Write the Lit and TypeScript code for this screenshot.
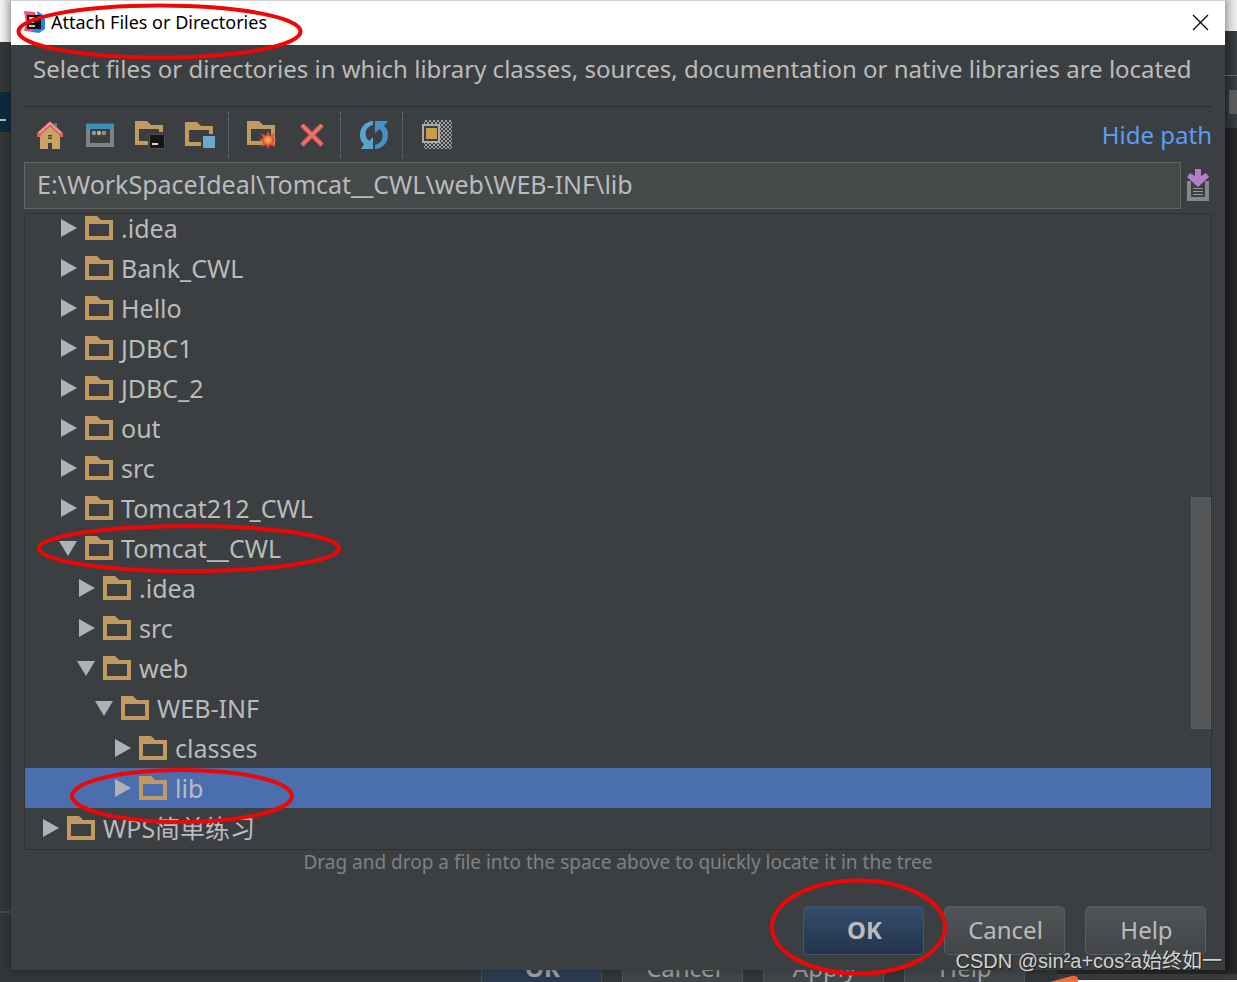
import { LitElement, html, css, svg } from "lit";
import { customElement, state } from "lit/decorators.js";
import { classMap } from "lit/directives/class-map.js";
import { styleMap } from "lit/directives/style-map.js";

interface Entry {
  name: string;
  depth: number;
  open?: boolean;
}

const ENTRIES: Entry[] = [
  { name: ".idea", depth: 1 },
  { name: "Bank_CWL", depth: 1 },
  { name: "Hello", depth: 1 },
  { name: "JDBC1", depth: 1 },
  { name: "JDBC_2", depth: 1 },
  { name: "out", depth: 1 },
  { name: "src", depth: 1 },
  { name: "Tomcat212_CWL", depth: 1 },
  { name: "Tomcat__CWL", depth: 1, open: true },
  { name: ".idea", depth: 2 },
  { name: "src", depth: 2 },
  { name: "web", depth: 2, open: true },
  { name: "WEB-INF", depth: 3, open: true },
  { name: "classes", depth: 4 },
  { name: "lib", depth: 4 },
  { name: "WPS简单练习", depth: 0 },
];

const folder = svg`<path fill="#c09a61" fill-rule="evenodd" d="M0 0H12L16 4H28V24H0ZM4 8V20H24V8Z"/>`;

const icons = {
  home: html`<svg width="28" height="30" viewBox="0 0 28 30" aria-hidden="true">
    <path fill="#6e6e6e" d="M18 3h3v8h-3z"/>
    <path fill="#c9a465" d="M4 13L14 4l10 9v16h-8v-6h-4v6H4z"/>
    <path fill="#3c3f41" d="M12 15h4v4h-4z"/>
    <path stroke="#c9a465" d="M12 17h4"/>
    <path fill="none" stroke="#d96464" stroke-width="4" d="M3 17v-3L14 4l11 10v3"/>
    <path fill="none" stroke="#f09a94" stroke-width="2" d="M3 13L14 3l11 10"/>
  </svg>`,
  desktop: html`<svg width="28" height="26" viewBox="0 0 28 26" aria-hidden="true">
    <path fill="none" stroke="#808284" stroke-width="4" d="M2 5v18h24V5"/>
    <path fill="#3e8fb8" d="M0 1h28v6H0z"/><path fill="#2c6c90" d="M0 1h28v1H0z"/>
    <circle cx="8" cy="11" r="2.2" fill="#6f9fbd"/><circle cx="13" cy="11" r="2.2" fill="#c9a86f"/><circle cx="18" cy="11" r="2.2" fill="#909395"/>
  </svg>`,
  project: html`<svg width="30" height="28" viewBox="0 0 30 28" aria-hidden="true">
    ${folder}<path fill="#3c3f41" d="M13 11h17v17H13z"/><path fill="#161616" stroke="#4b4d4f" d="M14.500 13.500h15v14h-15z"/><path fill="#d8d8d8" d="M17 22h6v2h-6z"/>
  </svg>`,
  module: html`<svg width="30" height="26" viewBox="0 0 30 26" aria-hidden="true">
    ${folder}<path fill="#3c3f41" d="M16 12h12v14H16z"/><path fill="#6da8c9" d="M18 14h12v12H18z"/>
  </svg>`,
  create: html`<svg width="30" height="28" viewBox="0 0 30 28" aria-hidden="true">
    ${folder}<path fill="#e0503a" d="M21 10l2 5 5-3-2 5 4 2-4 2 2 5-5-2-2 4-2-4-5 2 2-5-4-2 4-2-2-5 5 3z"/><circle cx="21" cy="19" r="4" fill="#f3853f"/><circle cx="21" cy="19" r="2" fill="#ffb75a"/>
  </svg>`,
  remove: html`<svg width="26" height="26" viewBox="0 0 26 26" aria-hidden="true">
    <path fill="none" stroke="#d85850" stroke-width="5" d="M3 3l20 20M23 3L3 23"/><path fill="none" stroke="#ed7c70" stroke-width="2" d="M3 3l20 20M23 3L3 23"/>
  </svg>`,
  refresh: html`<svg width="30" height="30" viewBox="0 0 30 30" aria-hidden="true">
    <path fill="#5ba3cf" d="M14 1C5 2 1 8 1 15c0 4 1 7 4 9l-3 5h12V17l-4 4C4 15 6 7 14 5z"/>
    <path fill="#4393c4" d="M16 29c9-1 13-7 13-14 0-4-1-7-4-9l4-5H16v12l5-4c5 6 3 14-5 16z"/>
  </svg>`,
  hidden: html`<svg width="31" height="29" viewBox="0 0 31 29" aria-hidden="true">
    <defs><pattern id="checks" width="4" height="4" patternUnits="userSpaceOnUse"><path fill="#9c9ea0" d="M0 0h2v2H0zM2 2h2v2H2z"/></pattern></defs>
    <path fill="url(#checks)" d="M3 0h28v29H3z"/>
    <path fill="#3c3f41" stroke="#a9abad" stroke-width="2" d="M2 5h16v17H2z"/><path fill="#c99d4c" d="M5 8h11v11H5z"/>
  </svg>`,
};

@customElement("app-root")
export class AppRoot extends LitElement {
  @state() private selected = 14;

  static styles = css`
    :host {
      display: block;
      position: relative;
      box-sizing: border-box;
      height: 100vh;
      overflow: hidden;
      padding: 0 12px 12px 11px;
      background: #333638;
      color: #bbbbbb;
      font: 24px/32px "Noto Sans", "Noto Sans CJK SC", sans-serif;
    }
    * { box-sizing: border-box; }
    button, input { font: inherit; color: inherit; margin: 0; padding: 0; border: 0; background: none; }
    svg { display: block; flex: none; }

    .behind { position: absolute; inset: 0; overflow: hidden; }
    .left-top { position: absolute; left: 0; top: 0; width: 11px; height: 42px; background: linear-gradient(90deg, #f4f4f4, #cfcfcf); }
    .left-pick { position: absolute; left: 0; top: 92px; width: 11px; height: 40px; background: #0d293e; border-right: 1px solid #1a2a35; }
    .left-mark { position: absolute; left: 0; top: 119px; width: 6px; height: 2px; background: #bbbbbb; }
    .left-rule { position: absolute; left: 0; top: 911px; width: 11px; height: 2px; background: #484b4d; }
    .right { position: absolute; right: 0; top: 0; width: 12px; height: 100%; background: linear-gradient(90deg, #1e1e1f, #28282a); }
    .right-top { height: 31px; background: linear-gradient(90deg, #cccccc, #efefef); }
    .right-bar { height: 97px; background: linear-gradient(90deg, #2c2e30, #3a3d3f); padding-top: 44px; }
    .right-bar::before { content: ""; display: block; height: 1px; background: #606264; }
    .right-bar::after { content: ""; display: block; height: 24px; margin: 14px 0 0 4px; background: #595b5d; }
    .under { position: absolute; left: 481px; top: 944px; display: flex; gap: 20px; opacity: 0.8; }
    .corner { position: absolute; left: 1057px; right: 0; top: 970px; height: 12px; background: #252627; }
    .corner::before { content: ""; position: absolute; left: 0; right: 0; top: 4px; height: 6px; background: #393b3d; }
    .corner::after { content: ""; position: absolute; left: 20px; right: 0; bottom: 0; height: 2px; background: #ffffff; }
    .flag { position: absolute; left: 1050px; top: 975px; }
    .push { width: 121px; height: 49px; border: 1px solid #5a5e60; border-radius: 5px; background: linear-gradient(#515557, #424547); text-align: center; line-height: 46px; padding: 0 0 2px 2px; }
    .push.main { background: linear-gradient(#344e6d, #24344b); border-color: #43566c; font-weight: 700; }

    .dialog { position: relative; height: 100%; display: flex; flex-direction: column; background: #3c3f41; box-shadow: 0 0 8px rgba(0, 0, 0, 0.35); }
    .title { flex: none; height: 45px; display: flex; align-items: center; gap: 5px; padding: 0 16px 2px 12px; background: #ffffff; color: #000000; border-top: 1px solid #d0d0d0; }
    .title h1 { flex: 1; margin: 0; font-size: 18px; font-weight: 400; line-height: 42px; }
    .body { flex: 1; min-height: 0; display: flex; flex-direction: column; padding: 0 13px 15px; }
    .lead { margin: 0 0 0 9px; padding: 8px 0 21px; white-space: nowrap; }
    .bar { flex: none; display: flex; align-items: center; height: 56px; border-top: 1px solid #2b2d2f; padding: 0 0 0 1px; }
    .tool { width: 50px; height: 40px; display: flex; align-items: center; justify-content: center; }
    .split { width: 1px; height: 46px; margin: 0 8px 0 3px; border-left: 1px dotted #77797b; }
    .bar a { margin-left: auto; color: #589df6; text-decoration: none; }
    .path { flex: none; display: flex; align-items: center; gap: 3px; margin-bottom: 4px; }
    .path input { flex: 1; min-width: 0; height: 47px; padding: 0 12px 4px; border: 1px solid #646464; background: #45494a; font-size: 25px; }
    .history { width: 28px; display: flex; justify-content: center; }

    .tree { position: relative; flex: 1; min-height: 0; display: flex; flex-direction: column; justify-content: flex-end; overflow: hidden; border: 1px solid #2f3133; padding-bottom: 1px; font-size: 25px; }
    .row { flex: none; height: 40px; display: flex; align-items: center; gap: 8px; text-align: left; white-space: pre; padding-right: 24px; }
    .row.on { background: #4b6eaf; }
    .thumb { position: absolute; right: 0; top: 283px; width: 20px; height: 232px; background: #555657; border: 1px solid #5c5d5e; }
    .hint { margin: 0 0 31px; line-height: 25px; font-size: 19px; text-align: center; color: #7f8183; }
    .actions { flex: none; display: flex; justify-content: flex-end; gap: 20px; padding-right: 6px; }

    .marks { position: absolute; inset: 0; width: 100%; height: 100%; pointer-events: none; }
    .credit { position: absolute; right: 15px; bottom: 6px; font-family: "Liberation Sans", "Noto Sans CJK SC", sans-serif; font-size: 20px; line-height: 30px; color: #d2d2d2; text-shadow: 1px 1px 1px #222222; white-space: nowrap; }
  `;

  private row(e: Entry, i: number) {
    return html`<button
      class=${classMap({ row: true, on: i === this.selected })}
      role="treeitem"
      aria-level=${e.depth + 1}
      aria-expanded=${e.open ? "true" : "false"}
      aria-selected=${i === this.selected ? "true" : "false"}
      style=${styleMap({ paddingLeft: `${16 + e.depth * 18}px` })}
      @click=${() => (this.selected = i)}
    ><svg width="18" height="20" viewBox="0 0 18 20" aria-hidden="true"><path fill="#afb1b3" d=${e.open ? "M0 3H18L9 18Z" : "M2 1L18 10L2 19Z"}/></svg><svg width="28" height="24" viewBox="0 0 28 24" aria-hidden="true">${folder}</svg><span>${e.name}</span></button>`;
  }

  render() {
    const tool = (label: string, icon: unknown) => html`<button class="tool" aria-label=${label}>${icon}</button>`;
    return html`
      <div class="behind" aria-hidden="true">
        <div class="left-top"></div>
        <div class="left-pick"></div>
        <div class="left-mark"></div>
        <div class="left-rule"></div>
        <div class="right"><div class="right-top"></div><div class="right-bar"></div></div>
        <div class="under">
          <button class="push main" tabindex="-1">OK</button>
          <button class="push" tabindex="-1">Cancel</button>
          <button class="push" tabindex="-1">Apply</button>
          <button class="push" tabindex="-1">Help</button>
        </div>
        <div class="corner"></div>
        <svg class="flag" width="28" height="7"><path fill="#f26b3a" d="M0 7L22 1q5-1 6 3v3z"/></svg>
      </div>

      <section class="dialog" role="dialog" aria-labelledby="title">
        <header class="title">
          <svg width="23" height="24" viewBox="0 0 23 24" aria-hidden="true">
            <path fill="#e8507a" d="M1 1l11 1 3 8-5 12-9-1 2-8z"/>
            <path fill="#2384e8" d="M14 1l8 5v13l-6 4-7-1 6-9z"/>
            <path fill="#120d14" d="M4 5h14v14H4z"/>
            <path stroke="#ffffff" stroke-width="1.500" d="M6 8h5M8 8v4M6 12h5M6 16h6"/>
          </svg>
          <h1 id="title">Attach Files or Directories</h1>
          <button aria-label="Close"><svg width="17" height="17" viewBox="0 0 17 17"><path fill="none" stroke="#000000" stroke-width="1.200" d="M1 1l15 15M16 1L1 16"/></svg></button>
        </header>
        <div class="body">
          <p class="lead">Select files or directories in which library classes, sources, documentation or native libraries are located</p>
          <div class="bar" role="toolbar">
            ${tool("Home", icons.home)}${tool("Desktop", icons.desktop)}${tool("Project", icons.project)}${tool("Module", icons.module)}
            <span class="split"></span>
            ${tool("New folder", icons.create)}${tool("Delete", icons.remove)}
            <span class="split"></span>
            ${tool("Refresh", icons.refresh)}
            <span class="split"></span>
            ${tool("Show hidden", icons.hidden)}
            <a href="#">Hide path</a>
          </div>
          <div class="path">
            <input type="text" aria-label="Path" .value=${"E:\\WorkSpaceIdeal\\Tomcat__CWL\\web\\WEB-INF\\lib"} />
            <button class="history" aria-label="Recent paths">
              <svg width="23" height="33" viewBox="0 0 23 33" aria-hidden="true">
                <path fill="#858789" d="M0 12h22v20H0z"/><path fill="#3c3f41" d="M4 12h14v16H4z"/>
                <path stroke="#97999b" stroke-width="1" d="M6 19.500h10M6 22.500h10M6 25.500h10"/>
                <path fill="#b07fc7" d="M8 0h6v7l5-3 3 4-11 10L0 8l3-4 5 3z"/>
              </svg>
            </button>
          </div>
          <div class="tree" role="tree" aria-label="Files">
            ${ENTRIES.map((e, i) => this.row(e, i))}
            <div class="thumb"></div>
          </div>
          <p class="hint">Drag and drop a file into the space above to quickly locate it in the tree</p>
          <div class="actions">
            <button class="push main">OK</button>
            <button class="push">Cancel</button>
            <button class="push">Help</button>
          </div>
        </div>
      </section>

      <svg class="marks" aria-hidden="true" fill="none" stroke="#f20505" stroke-width="4">
        <ellipse cx="159.500" cy="31.500" rx="141" ry="26"/>
        <ellipse cx="189" cy="548.500" rx="150" ry="22.500"/>
        <ellipse cx="182" cy="796" rx="110" ry="26"/>
        <ellipse cx="858.500" cy="927" rx="86.500" ry="46.500"/>
      </svg>
      <div class="credit">CSDN @sin²a+cos²a始终如一</div>
    `;
  }
}
